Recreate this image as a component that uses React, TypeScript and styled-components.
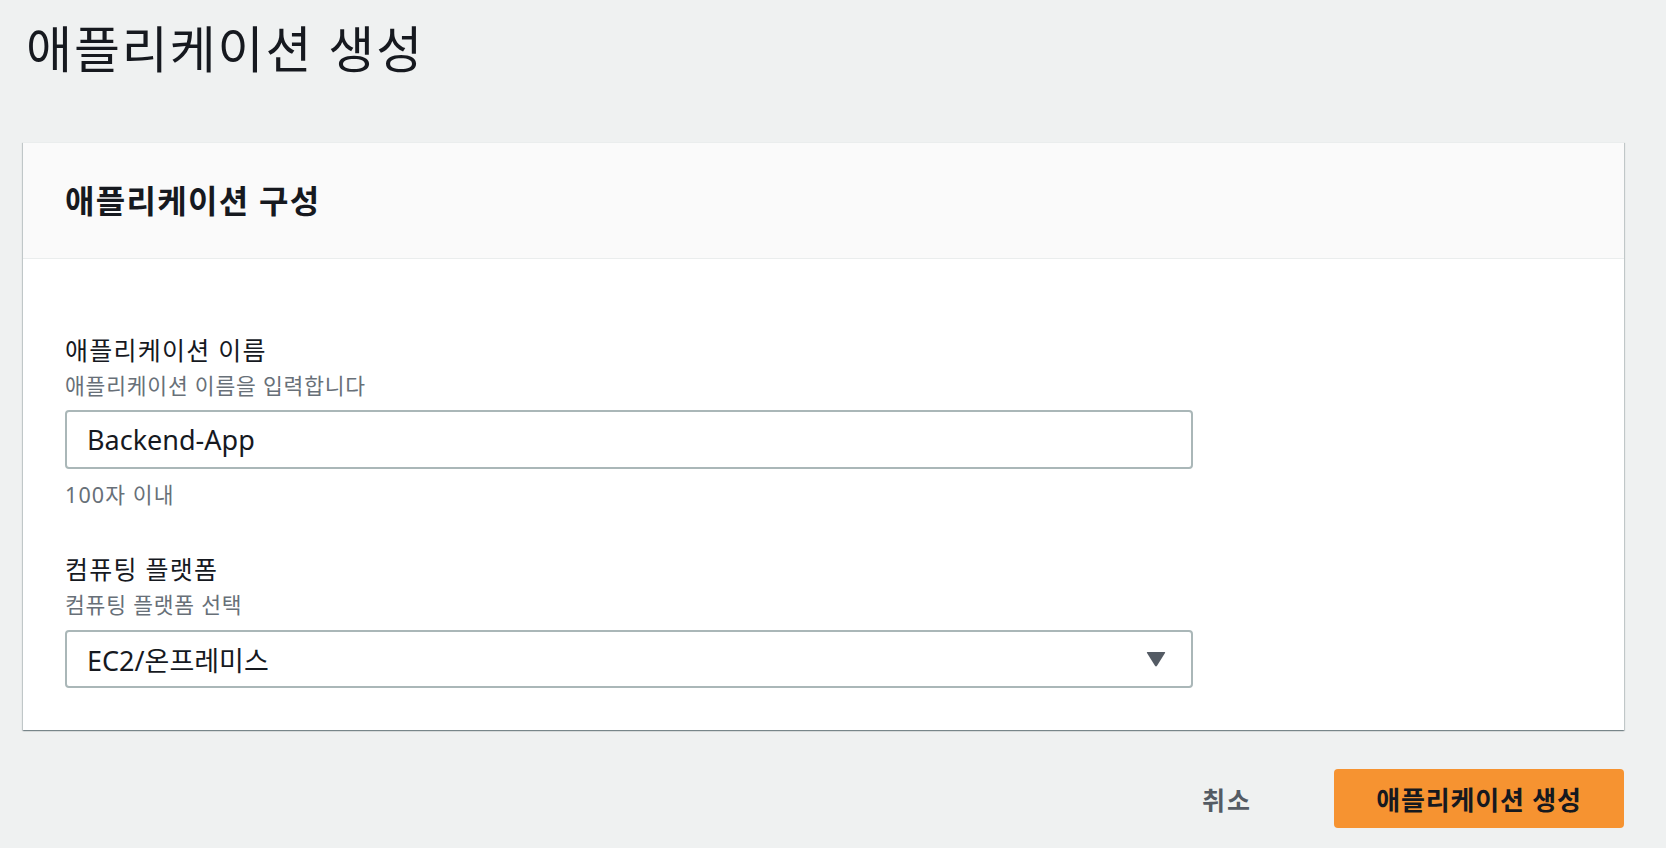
import React from "react";
import styled, { createGlobalStyle } from "styled-components";

const GlobalStyle = createGlobalStyle`
  html, body {
    margin: 0;
    padding: 0;
    background: #eff1f1;
  }
  body {
    font-family: "Noto Sans", "Noto Sans CJK KR", sans-serif;
    color: #16191f;
  }
  * { box-sizing: border-box; }
`;

const Page = styled.div`
  padding: 0 42px 0 23px;
`;

const PageTitle = styled.h1`
  margin: 19px 0 63px 3px;
  font-size: 50px;
  line-height: 60px;
  letter-spacing: 1.9px;
  font-weight: 400;
  color: #16191f;
`;

const Card = styled.section`
  background: #ffffff;
  border-top: 1px solid #eaeded;
  box-shadow: 0 1px 1px 0 rgba(0, 28, 36, 0.3),
    1px 1px 1px 0 rgba(0, 28, 36, 0.15),
    -1px 1px 1px 0 rgba(0, 28, 36, 0.15);
`;

const CardHeader = styled.header`
  height: 116px;
  display: flex;
  align-items: center;
  padding: 0 42px;
  background: #fafafa;
  border-bottom: 1px solid #eaeded;
`;

const CardTitle = styled.h2`
  margin: 0;
  font-size: 32px;
  line-height: 40px;
  letter-spacing: 1.3px;
  font-weight: 700;
  color: #16191f;
`;

const CardBody = styled.div`
  padding: 75px 42px 42px;
`;

const Field = styled.div<{ $spaced?: boolean }>`
  display: flex;
  flex-direction: column;
  margin-top: ${(p) => (p.$spaced ? "44px" : "0")};
`;

const Label = styled.label`
  font-size: 25px;
  line-height: 32px;
  letter-spacing: 1.25px;
  color: #16191f;
`;

const Description = styled.div`
  margin-top: 6px;
  font-size: 21.5px;
  line-height: 28px;
  letter-spacing: 0.8px;
  color: #687078;
`;

const Hint = styled.div`
  margin-top: 12px;
  font-size: 21.5px;
  line-height: 28px;
  letter-spacing: 1.1px;
  color: #687078;
`;

const TextInput = styled.input`
  margin-top: 10px;
  width: 1128px;
  height: 59px;
  padding: 0 20px;
  border: 2px solid #aab7b8;
  border-radius: 4px;
  background: #ffffff;
  font-family: inherit;
  font-size: 27px;
  color: #16191f;
  outline: none;
`;

const SelectBox = styled.div`
  margin-top: 11px;
  width: 1128px;
  height: 58px;
  padding: 0 25px 0 20px;
  border: 2px solid #aab7b8;
  border-radius: 4px;
  background: #ffffff;
  display: flex;
  align-items: center;
  justify-content: space-between;
`;

const SelectValue = styled.span`
  font-size: 27px;
  color: #16191f;
`;

const Caret = styled.svg`
  width: 20px;
  height: 16px;
  display: block;
`;

const Footer = styled.div`
  margin-top: 39px;
  display: flex;
  justify-content: flex-end;
  align-items: center;
  gap: 41px;
`;

const CancelButton = styled.button`
  height: 59px;
  padding: 0 41px;
  border: none;
  background: transparent;
  font-family: inherit;
  font-size: 25px;
  letter-spacing: 2px;
  font-weight: 700;
  color: #545b64;
  cursor: pointer;
`;

const PrimaryButton = styled.button`
  height: 59px;
  width: 290px;
  padding: 0;
  border: none;
  border-radius: 4px;
  background: #f69331;
  font-family: inherit;
  font-size: 26px;
  letter-spacing: 0.8px;
  font-weight: 700;
  color: #16191f;
  cursor: pointer;
`;

export default function App() {
  return (
    <Page>
      <GlobalStyle />
      <PageTitle>애플리케이션 생성</PageTitle>
      <Card>
        <CardHeader>
          <CardTitle>애플리케이션 구성</CardTitle>
        </CardHeader>
        <CardBody>
          <Field>
            <Label>애플리케이션 이름</Label>
            <Description>애플리케이션 이름을 입력합니다</Description>
            <TextInput defaultValue="Backend-App" />
            <Hint>100자 이내</Hint>
          </Field>
          <Field $spaced>
            <Label>컴퓨팅 플랫폼</Label>
            <Description>컴퓨팅 플랫폼 선택</Description>
            <SelectBox>
              <SelectValue>EC2/온프레미스</SelectValue>
              <Caret viewBox="0 0 20 16">
                <path
                  d="M1.5 1 H18.5 Q19.6 1 19 2 L11 14.8 Q10 16 9 14.8 L1 2 Q0.4 1 1.5 1 Z"
                  fill="#545b64"
                />
              </Caret>
            </SelectBox>
          </Field>
        </CardBody>
      </Card>
      <Footer>
        <CancelButton>취소</CancelButton>
        <PrimaryButton>애플리케이션 생성</PrimaryButton>
      </Footer>
    </Page>
  );
}
